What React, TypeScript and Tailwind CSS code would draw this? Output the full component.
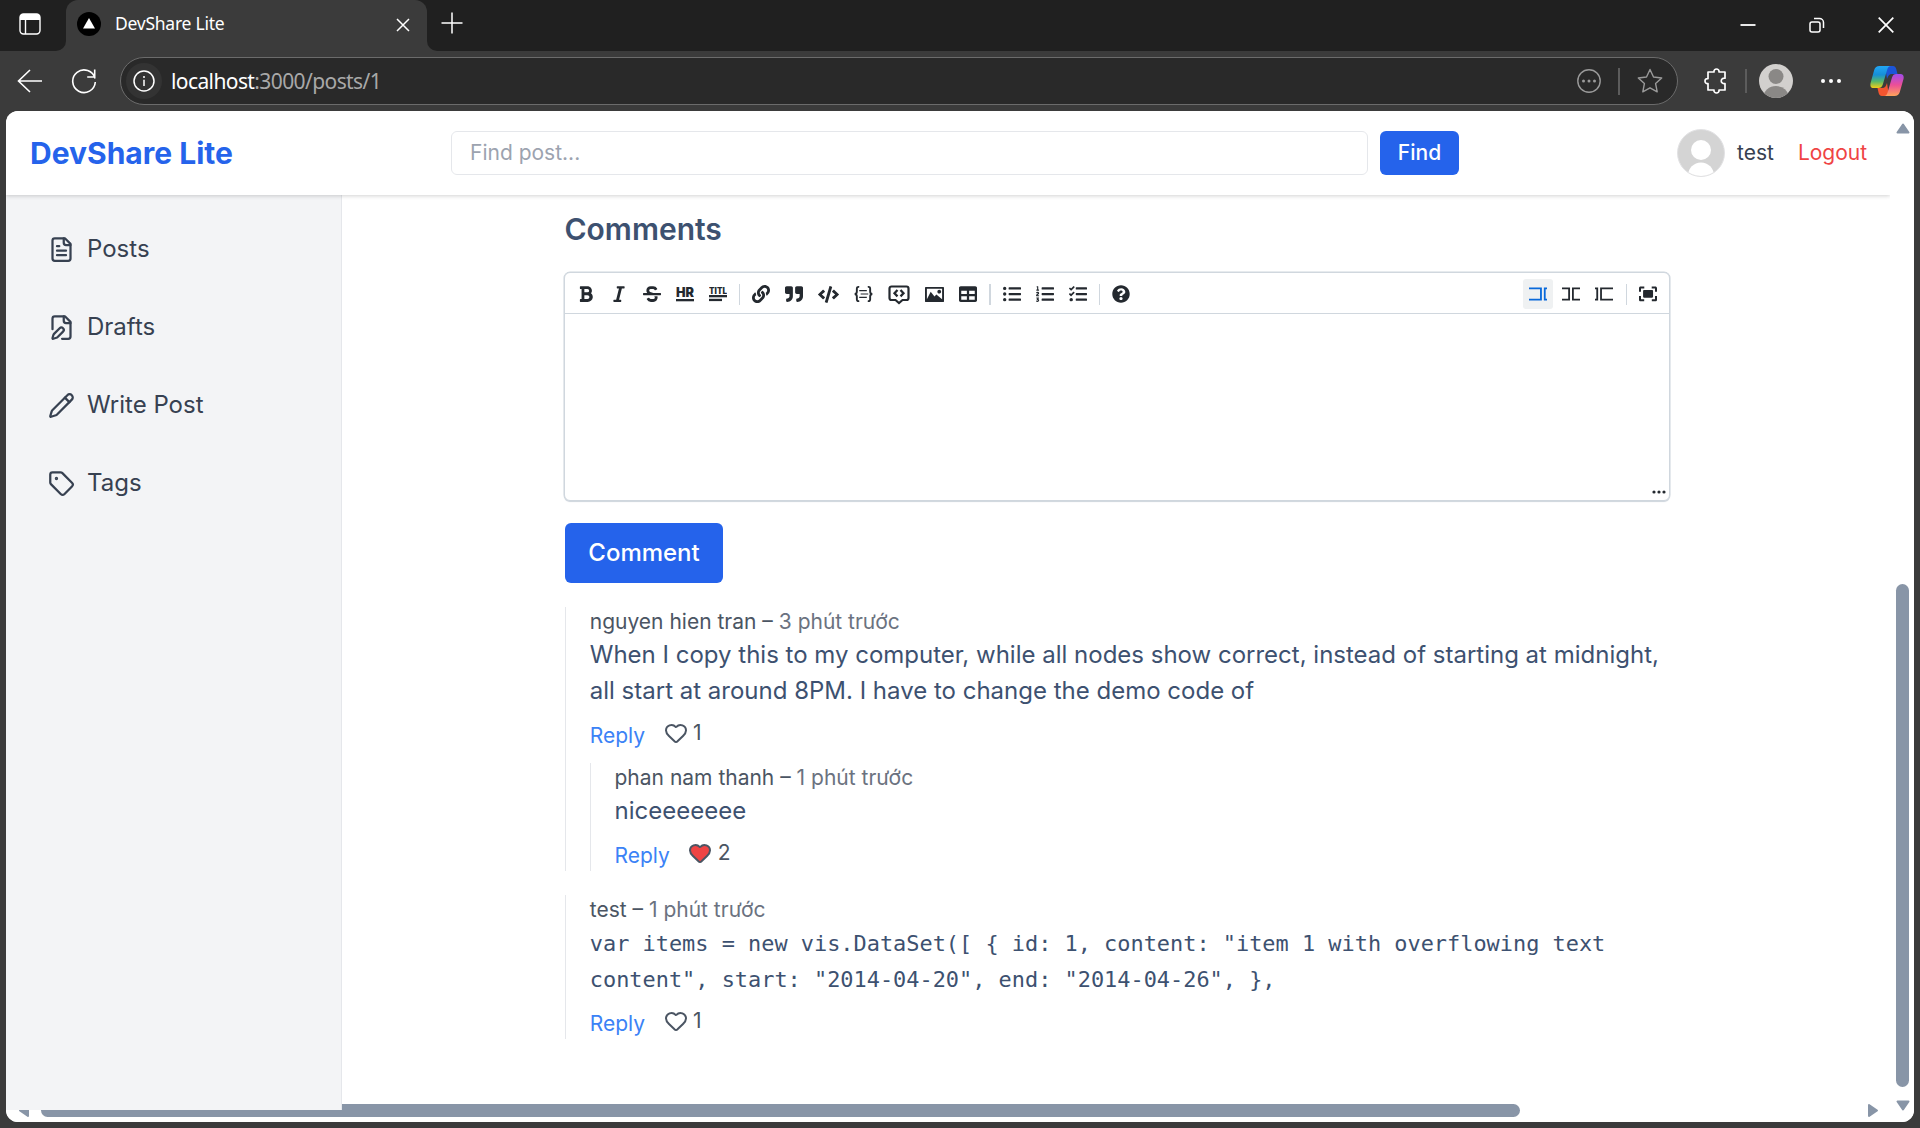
import type { ReactNode } from "react";
import { Heart, Pencil, Tag } from "lucide-react";
import {
  FaBold,
  FaCode,
  FaItalic,
  FaLink,
  FaListOl,
  FaListUl,
  FaQuestionCircle,
  FaQuoteRight,
  FaStrikethrough,
  FaTable,
  FaTasks,
} from "react-icons/fa";

/* ---------- Browser chrome ---------- */

function TabStrip() {
  return (
    <div className="flex h-[51px] shrink-0 bg-[#202020] text-white">
      <div className="flex w-[66px] bg-[#3b3b3b]">
        <div className="flex w-full items-center justify-center rounded-br-[10px] bg-[#202020] pr-1.5 pb-1">
          <svg width="22" height="22" viewBox="0 0 22 22" fill="none" stroke="currentColor" strokeWidth="1.4">
            <rect x="1" y="1" width="20" height="20" rx="3.5" />
            <path d="M1 7V4a3 3 0 0 1 3-3h14a3 3 0 0 1 3 3v3z" fill="currentColor" stroke="none" />
            <path d="M6.5 6v15" />
          </svg>
        </div>
      </div>
      <div className="flex w-[361px] bg-[#202020]">
        <div className="flex w-full items-center rounded-t-xl bg-[#3b3b3b] pr-[16px] pb-[4px] pl-[11px]">
          <svg width="24" height="24" viewBox="0 0 24 24">
            <circle cx="12" cy="12" r="12" fill="#000" />
            <path d="M12 6l6 10.500H6z" fill="#fff" />
          </svg>
          <span className="ml-[14px] text-[17.5px] tracking-[-0.25px] font-['Noto_Sans',sans-serif]">DevShare Lite</span>
          <svg className="mt-[3px] ml-auto" width="16" height="16" viewBox="0 0 16 16" stroke="currentColor" strokeWidth="1.5">
            <path d="M2 2l12 12M14 2L2 14" />
          </svg>
        </div>
      </div>
      <div className="flex flex-1 bg-[#3b3b3b]">
        <div className="flex flex-1 items-center rounded-bl-[10px] bg-[#202020] pb-[5px] pl-[14px]">
          <svg width="22" height="22" viewBox="0 0 22 22" stroke="currentColor" strokeWidth="1.5">
            <path d="M11 0.500v21M0.500 11h21" />
          </svg>
          <svg className="mt-1 ml-auto" width="16" height="16" viewBox="0 0 16 16" stroke="currentColor" strokeWidth="1.8">
            <path d="M0.500 8h15" />
          </svg>
          <svg className="mt-1 ml-[53px]" width="16" height="16" viewBox="0 0 16 16" fill="none" stroke="currentColor" strokeWidth="1.5">
            <rect x="1" y="5" width="10" height="10" rx="2" />
            <path d="M5 1.500h5.500a4 4 0 0 1 4 4V11" />
          </svg>
          <svg className="mt-1 mr-[26.5px] ml-[53px]" width="16" height="16" viewBox="0 0 16 16" stroke="currentColor" strokeWidth="1.7">
            <path d="M0.700 0.700l14.600 14.600M15.300 0.700L0.700 15.300" />
          </svg>
        </div>
      </div>
    </div>
  );
}

function CopilotLogo() {
  return (
    <svg width="34" height="32" viewBox="0 0 34 32">
      <defs>
        <linearGradient id="cpBlue" x1="0" y1="0" x2="0" y2="1">
          <stop offset="0" stopColor="#22a7f5" />
          <stop offset="0.400" stopColor="#168fd8" />
          <stop offset="0.700" stopColor="#58b86a" />
          <stop offset="1" stopColor="#f4ce16" />
        </linearGradient>
        <linearGradient id="cpPink" x1="0" y1="0" x2="0" y2="1">
          <stop offset="0" stopColor="#a14bec" />
          <stop offset="0.500" stopColor="#ec4f97" />
          <stop offset="1" stopColor="#ffa45a" />
        </linearGradient>
      </defs>
      <path d="M15 1h8c2 0 2.800 1.500 3.300 3.200L27.500 9H22c-3 0-4 2-5 5z" fill="#1c55d8" />
      <path d="M19 31h-7c-2 0-3-1.500-3.400-3.200L7.500 23H12c3 0 4-2 5-5z" fill="#f4552f" />
      <path d="M9.500 1H21c-2 0-3.200 1.500-3.900 4l-4.300 14.500c-.8 2.400-2 3.500-4.500 3.500H3.500C.7 23 0 21 .6 18L4.200 5C5 2.300 6.700 1 9.500 1z" fill="url(#cpBlue)" />
      <path d="M24.500 31H14c2 0 3-1.500 3.700-4L22 12.500C22.800 10 24 9 26.300 9h4.200c2.800 0 3.600 2 3 5l-3.700 13c-.8 2.700-2.500 4-5.300 4z" fill="url(#cpPink)" />
    </svg>
  );
}

function AddressBar() {
  return (
    <div className="flex h-[60px] shrink-0 items-center bg-[#3b3b3b] text-white">
      <svg className="ml-[17px]" width="26" height="24" viewBox="0 0 26 24" fill="none" stroke="currentColor" strokeWidth="1.6">
        <path d="M25 12H1.500M13 1L1.500 12 13 23" />
      </svg>
      <svg className="ml-[28px]" width="26" height="26" viewBox="0 0 26 26" fill="none" stroke="currentColor" strokeWidth="1.6">
        <path d="M24 10.500A11.300 11.300 0 1 0 24.300 14M23.700 1.500v7.500h-7.500" />
      </svg>
      <div className="ml-[23px] flex h-12 w-[1558px] items-center rounded-full border border-[#6b6b6b] bg-[#292929] pl-[5px]">
        <div className="flex size-9 items-center justify-center rounded-full bg-[#333333]">
          <svg width="22" height="22" viewBox="0 0 22 22" fill="none" stroke="currentColor" strokeWidth="1.5">
            <circle cx="11" cy="11" r="10" />
            <path d="M11 9.800v6.200M11 6v2" />
          </svg>
        </div>
        <div className="mt-0.5 ml-[9px] text-[21px] tracking-[-0.6px] text-[#a8a8a8] font-['Noto_Sans',sans-serif]">
          <span className="text-white">localhost</span>:3000/posts/1
        </div>
        <svg className="ml-auto text-[#9a9a9a]" width="24" height="24" viewBox="0 0 24 24" fill="none" stroke="currentColor" strokeWidth="1.4">
          <circle cx="12" cy="12" r="11.200" />
          <g fill="currentColor" stroke="none">
            <circle cx="6.500" cy="12" r="1.500" />
            <circle cx="12" cy="12" r="1.500" />
            <circle cx="17.500" cy="12" r="1.500" />
          </g>
        </svg>
        <div className="ml-[17px] h-[27px] w-0.5 bg-[#5c5c5c]" />
        <svg className="mr-[14px] ml-[17px] text-[#9a9a9a]" width="26" height="26" viewBox="0 0 26 26" fill="none" stroke="currentColor" strokeWidth="1.4" strokeLinejoin="round">
          <path d="M13 1.500l3.500 7.500 8.200 1-6.100 5.600 1.600 8.200-7.200-4-7.200 4 1.600-8.200L1.300 10l8.200-1z" />
        </svg>
      </div>
      <svg className="ml-[26px]" width="24" height="26" viewBox="0 0 24 26" fill="none" stroke="currentColor" strokeWidth="1.7" strokeLinejoin="round">
        <path d="M4 4h6c-.6-4 5.600-4 5 0h6v6.200c-5-.6-5 6 0 5.400V22h-6c.6 4-5.600 4-5 0H4v-6.400c-4 .6-4-5.600 0-5z" />
      </svg>
      <div className="ml-[17px] h-6 w-0.5 bg-[#5c5c5c]" />
      <svg className="ml-[12px]" width="34" height="34" viewBox="0 0 34 34">
        <clipPath id="profileClip">
          <circle cx="17" cy="17" r="17" />
        </clipPath>
        <g clipPath="url(#profileClip)">
          <rect width="34" height="34" fill="#d2d0ce" />
          <circle cx="17" cy="12.500" r="7.500" fill="#8a8886" />
          <ellipse cx="17" cy="33" rx="12.500" ry="11" fill="#8a8886" />
        </g>
      </svg>
      <svg className="ml-[26.5px]" width="22" height="6" viewBox="0 0 22 6" fill="currentColor">
        <circle cx="3" cy="3" r="2" />
        <circle cx="11" cy="3" r="2" />
        <circle cx="19" cy="3" r="2" />
      </svg>
      <div className="ml-[28.5px]">
        <CopilotLogo />
      </div>
    </div>
  );
}

/* ---------- Site header and sidebar ---------- */

function SiteHeader() {
  return (
    <header className="z-20 flex h-[84px] shrink-0 items-center bg-white pl-6 shadow-[0_1px_4px_rgba(0,0,0,0.18)]">
      <div className="w-[421px] text-[30px] font-bold text-[#2563eb]">DevShare Lite</div>
      <div className="flex h-11 w-[917px] items-center rounded-md border border-[#e5e7eb] px-[18px] text-[21px] text-[#9ca3af]">
        Find post...
      </div>
      <button className="ml-3 h-11 w-[79px] rounded-md bg-[#2563eb] text-[21px] font-medium text-white">Find</button>
      <svg className="ml-[218px]" width="48" height="48" viewBox="0 0 48 48">
        <clipPath id="avatarClip">
          <circle cx="24" cy="24" r="23" />
        </clipPath>
        <circle cx="24" cy="24" r="23.500" fill="#d4d4d4" stroke="#e2e2e4" />
        <g clipPath="url(#avatarClip)" fill="#fff">
          <circle cx="24" cy="21" r="10" />
          <ellipse cx="24" cy="46.500" rx="13" ry="13" />
        </g>
      </svg>
      <span className="ml-3 text-[21px] text-[#374151]">test</span>
      <span className="ml-6 text-[21px] text-[#ef4444]">Logout</span>
    </header>
  );
}

const navItems = [
  { label: "Posts", Icon: DocumentIcon },
  { label: "Drafts", Icon: DraftIcon },
  { label: "Write Post", Icon: Pencil },
  { label: "Tags", Icon: Tag },
];

type IconProps = { className?: string; size?: number };

function DocumentIcon({ className, size }: IconProps) {
  return (
    <svg className={className} width={size} height={size} viewBox="0 0 24 24" fill="none" stroke="currentColor" strokeWidth="2" strokeLinecap="round" strokeLinejoin="round">
      <path d="M15 2H6a2 2 0 0 0-2 2v16a2 2 0 0 0 2 2h12a2 2 0 0 0 2-2V7z" />
      <path d="M14 2v4a2 2 0 0 0 2 2h4M10 9H8M16 13H8M16 17H8" />
    </svg>
  );
}

function DraftIcon({ className, size }: IconProps) {
  return (
    <svg className={className} width={size} height={size} viewBox="0 0 24 24" fill="none" stroke="currentColor" strokeWidth="2" strokeLinecap="round" strokeLinejoin="round">
      <path d="M12.500 22H18a2 2 0 0 0 2-2V7l-5-5H6a2 2 0 0 0-2 2v9.500" />
      <path d="M14 2v4a2 2 0 0 0 2 2h4M13.378 15.626a1 1 0 1 0-3.004-3.004l-5.010 5.012a2 2 0 0 0-.506.854l-.837 2.870a.5.5 0 0 0 .620.620l2.870-.837a2 2 0 0 0 .854-.506z" />
    </svg>
  );
}

function Sidebar() {
  return (
    <nav className="z-10 -mb-1.5 flex w-[336px] shrink-0 flex-col gap-12 border-r border-[#e5e7eb] bg-[#f3f4f6] pt-[39px] pl-[42px] text-2xl/[30px] text-[#374151]">
      {navItems.map(({ label, Icon }) => (
        <a key={label} className="flex items-center gap-3">
          <Icon size={27} />
          {label}
        </a>
      ))}
    </nav>
  );
}

/* ---------- Markdown editor ---------- */

function LetterRuleIcon({ label, wide }: { label: string; wide?: boolean }) {
  return (
    <svg width="18" height="18" viewBox="0 0 18 18" fill="currentColor">
      <text x="0" y={wide ? 8.5 : 12} textLength="18" lengthAdjust="spacingAndGlyphs" fontFamily="Inter, sans-serif" fontWeight="900" fontSize={wide ? 8.5 : 13}>
        {label}
      </text>
      <rect x="0" y={wide ? 10 : 14} width="18" height="2.3" />
      {wide && <rect x="0" y="13.800" width="13" height="2.3" />}
    </svg>
  );
}

function BraceIcon() {
  return (
    <svg width="19" height="18" viewBox="0 0 20 18" fill="none" stroke="currentColor" strokeWidth="2">
      <path d="M5.500 1.500C3.500 1.300 3 2 3 3.500v2.800C3 8 2.300 8.800 .8 9 2.300 9.200 3 10 3 11.700v2.800c0 1.500.5 2.200 2.500 2M14.500 1.500c2-.2 2.500.5 2.500 2v2.800C17 8 17.700 8.800 19.200 9c-1.500.2-2.200 1-2.200 2.700v2.800c0 1.500-.5 2.200-2.500 2" />
      <path d="M5.500 5.500h8M7 9h8M5.500 12.500h8" strokeWidth="1.300" />
    </svg>
  );
}

function CommentCodeIcon() {
  return (
    <svg className="mt-0.5" width="22" height="20" viewBox="0 0 22 20" fill="none" stroke="currentColor">
      <path d="M3.500 1.500h15a2 2 0 0 1 2 2v9.500a2 2 0 0 1-2 2h-4L11 18l-3.500-3h-4a2 2 0 0 1-2-2V3.500a2 2 0 0 1 2-2z" strokeWidth="2.2" />
      <path d="M9.500 5L6.500 8.200l3 3.200M12.500 5l3 3.200-3 3.200" strokeWidth="2.300" />
    </svg>
  );
}

function PictureIcon() {
  return (
    <svg width="19" height="19" viewBox="0 0 20 20" fill="currentColor">
      <path d="M15 9c1.100 0 2-.9 2-2s-.9-2-2-2-2 .9-2 2 .9 2 2 2zm4-7H1c-.55 0-1 .45-1 1v14c0 .55.45 1 1 1h18c.55 0 1-.45 1-1V3c0-.55-.45-1-1-1zm-1 13l-6-5-2 2-4-5-4 8V4h16v11z" />
    </svg>
  );
}

function PaneIcon({ left, right }: { left: string; right: string }) {
  return (
    <svg width="18" height="18" viewBox="0 0 520 520" fill="currentColor">
      <polygon points={left} />
      <polygon points={right} />
    </svg>
  );
}

function FullscreenIcon() {
  return (
    <svg width="18" height="18" viewBox="0 0 520 520" fill="currentColor">
      <path d="M118 171v171c0 12 9 23 23 23h242c12 0 23-9 23-23V171c0-12-9-23-23-23H141c-14 0-23 9-23 23zM465 413h-95v58h104c26 0 46-20 46-46V321h-58v92zM471 43H367v58h95v95h58V89c-3-26-23-46-49-46zM58 101h95V43H46C20 43 0 63 0 89v104h58zM58 321H0v104c0 26 20 46 46 46h104v-58H58z" />
    </svg>
  );
}

function Separator({ className = "-mx-[3.5px]" }: { className?: string }) {
  return <div className={`h-[21px] w-[1.5px] bg-[#d0d7de] ${className}`} />;
}

function Editor() {
  return (
    <div className="flex h-[229px] w-[1106px] flex-col rounded-md border-[1.5px] border-[#d0d7de] bg-white text-[#24292f] shadow-[0_0_0_0.5px_#d0d7de,0_1px_1px_#d0d7de]">
      <div className="flex h-[41px] items-center justify-between border-b border-[#d0d7de] px-3 pt-[2px]">
        <div className="flex items-center gap-[15px]">
          <FaBold size={18} />
          <FaItalic size={18} />
          <FaStrikethrough size={18} />
          <LetterRuleIcon label="HR" />
          <LetterRuleIcon label="TITL" wide />
          <Separator />
          <FaLink size={18} />
          <FaQuoteRight size={18} />
          <FaCode size={21} />
          <BraceIcon />
          <CommentCodeIcon />
          <PictureIcon />
          <FaTable size={18} />
          <Separator className="-mr-[2.5px] -ml-[2.5px]" />
          <FaListUl size={18} />
          <FaListOl size={18} />
          <FaTasks size={18} />
          <Separator />
          <FaQuestionCircle size={18} />
        </div>
        <div className="flex items-center gap-[15px]">
          <div className="-mx-1.5 flex size-[30px] items-center justify-center rounded-[3px] bg-[#eff1f2] text-[#0969da]">
            <PaneIcon
              left="0 71.293 0 122 319 122 319 397 0 397 0 449.707 372 449.413 372 71.293"
              right="429 71.293 520 71.293 520 122 481 123 481 396 520 396 520 449.707 429 449.413"
            />
          </div>
          <PaneIcon
            left="0 71.293 0 122 179 122 179 397 0 397 0 449.707 232 449.413 232 71.293"
            right="289 71.293 520 71.293 520 122 341 123 341 396 520 396 520 449.707 289 449.413"
          />
          <PaneIcon
            left="0 71.293 0 122 38.023 123 38.023 398 0 397 0 449.707 91.023 450.413 91.023 72.293"
            right="148.023 72.293 520 71.293 520 122 200.023 124 200.023 397 520 396 520 449.707 148.023 450.413"
          />
          <Separator className="-mr-[3px] -ml-[2px]" />
          <FullscreenIcon />
        </div>
      </div>
      <div className="flex flex-1 items-end justify-end pr-[3.5px] pb-[6.5px]">
        <svg width="14" height="4" viewBox="0 0 14 4" fill="currentColor">
          <circle cx="2" cy="2" r="1.600" />
          <circle cx="7" cy="2" r="1.600" />
          <circle cx="12" cy="2" r="1.600" />
        </svg>
      </div>
    </div>
  );
}

/* ---------- Comment thread ---------- */

type CommentProps = {
  author: string;
  age: string;
  likes: number;
  liked?: boolean;
  body: ReactNode;
  children?: ReactNode;
};

function Comment({ author, age, likes, liked, body, children }: CommentProps) {
  return (
    <article className="border-l border-[#e5e7eb] pl-[23.75px]">
      <p className="text-[21px]/[30px] text-[#4b5563]">
        {author} – <span className="text-[#6b7280]">{age}</span>
      </p>
      <div className="text-2xl/9 text-[#3d5170]">{body}</div>
      <div className="mt-3 flex h-[30px] items-center text-[21px]/[30px]">
        <span className="text-[#3b82f6]">Reply</span>
        <span className="mb-1.5 ml-[18.5px] flex items-center gap-[5.5px] text-[#4b5563]">
          <Heart size={24} className={liked ? "fill-[#ef4444]" : ""} />
          {likes}
        </span>
      </div>
      {children && <div className="mt-3">{children}</div>}
    </article>
  );
}

function Main() {
  return (
    <main className="flex w-[1107px] flex-col pt-4">
      <h2 className="ml-[0.5px] text-[30px]/9 font-semibold text-[#3d5170]">Comments</h2>
      <div className="mt-[25px]">
        <Editor />
      </div>
      <button className="mt-[22px] ml-px h-[60px] w-[158px] rounded-md bg-[#2563eb] text-2xl font-medium text-white">Comment</button>
      <div className="mt-6 ml-px flex flex-col gap-6">
        <Comment
          author="nguyen hien tran"
          age="3 phút trước"
          likes={1}
          body={
            <>
              When I copy this to my computer, while all nodes show correct, instead of starting at midnight,
              <br />
              all start at around 8PM. I have to change the demo code of
            </>
          }
        >
          <Comment author="phan nam thanh" age="1 phút trước" likes={2} liked body="niceeeeeee" />
        </Comment>
        <Comment
          author="test"
          age="1 phút trước"
          likes={1}
          body={
            <code className="-mb-px block pt-px text-[21.92px]/9 whitespace-pre font-['DejaVu_Sans_Mono',monospace]">
              {'var items = new vis.DataSet([ { id: 1, content: "item 1 with overflowing text\ncontent", start: "2014-04-20", end: "2014-04-26", },'}
            </code>
          }
        />
      </div>
    </main>
  );
}

/* ---------- Scroll bars ---------- */

function Arrow({ className }: { className?: string }) {
  return (
    <svg className={className} width="14" height="11" viewBox="0 0 14 11">
      <path d="M7 1.500L12.500 9.500H1.500z" fill="#8895a7" stroke="#8895a7" strokeWidth="2" strokeLinejoin="round" />
    </svg>
  );
}

function HorizontalScrollbar() {
  return (
    <div className="flex h-[18px] shrink-0 items-start bg-white pl-[11px]">
      <Arrow className="mt-px -rotate-90" />
      <div className="ml-[10px] h-[13px] w-[1479px] rounded-full bg-[#8895a7]" />
      <Arrow className="mt-px mr-[10px] ml-auto rotate-90" />
    </div>
  );
}

function VerticalScrollbar() {
  return (
    <div className="z-30 flex w-6 shrink-0 flex-col items-center bg-white pt-[12px] pl-px">
      <Arrow />
      <div className="mt-[450px] h-[503px] w-[13px] rounded-full bg-[#8895a7]" />
      <Arrow className="mt-[13px] rotate-180" />
    </div>
  );
}

export default function App() {
  return (
    <div className="flex h-[1128px] w-[1920px] flex-col overflow-hidden bg-[#3b3b3b] font-['Inter',sans-serif]">
      <TabStrip />
      <AddressBar />
      <div className="mx-1.5 mb-1.5 flex flex-1 overflow-hidden rounded-xl bg-white">
        <div className="flex w-[1884px] flex-col">
          <SiteHeader />
          <div className="flex flex-1">
            <Sidebar />
            <div className="ml-[222px]">
              <Main />
            </div>
          </div>
          <HorizontalScrollbar />
        </div>
        <VerticalScrollbar />
      </div>
    </div>
  );
}
